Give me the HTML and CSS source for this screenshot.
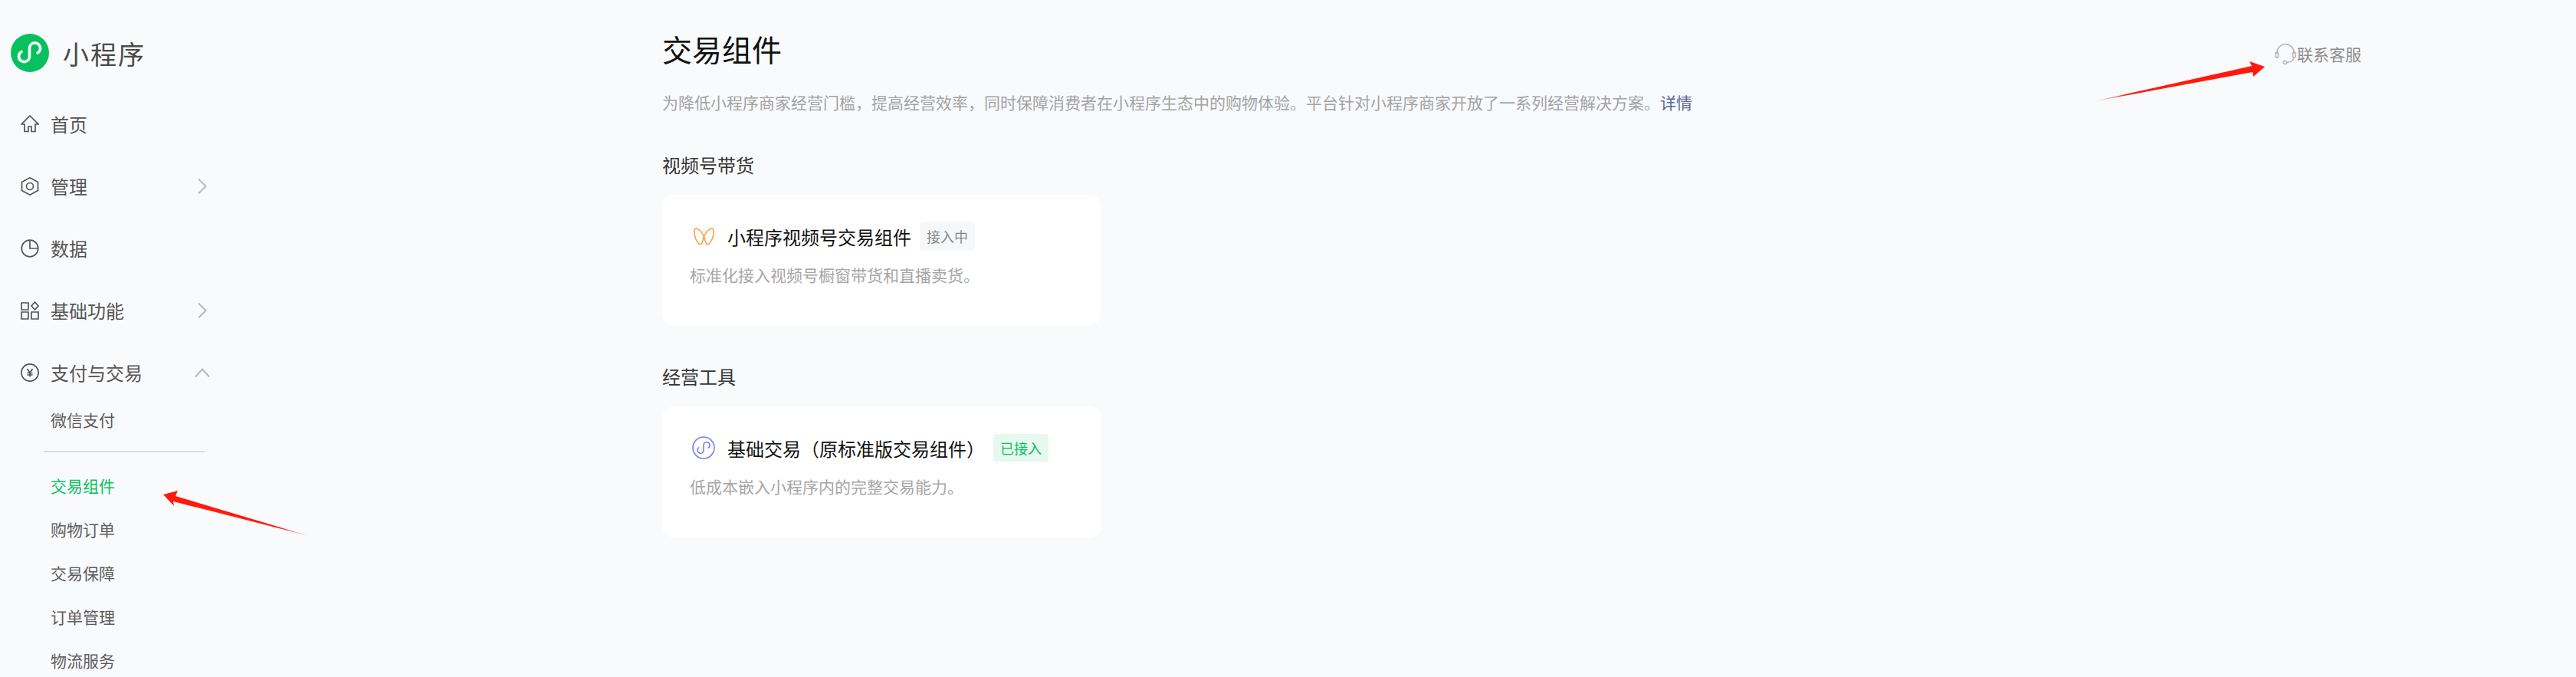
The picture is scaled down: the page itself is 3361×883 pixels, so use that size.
FILE: index.html

```html
<!DOCTYPE html>
<html lang="zh-CN">
<head>
    <meta charset="utf-8">
    <title>交易组件</title>
    <link rel="stylesheet" href="styles.css">
</head>
<body>
    <div class="page">
        <aside class="sidebar">
            <div class="brand">
                <svg class="brand-logo" viewBox="0 0 50 50">
                    <circle cx="25" cy="25" r="25" fill="#07c160"/>
                    <path d="M14 23.5A7 7 0 1 0 24.5 30V19A7 7 0 1 1 35 25" fill="none" stroke="#fff" stroke-width="3.6" stroke-linecap="round"/>
                </svg>
                <span class="brand-name">小程序</span>
            </div>

            <nav class="menu">
                <div class="menu-item">
                    <svg class="menu-icon" viewBox="0 0 24 24"><path d="M1 12 12 1l11 11h-4v9.500h-5V15h-4v6.500H5V12z"/></svg>
                    <span class="menu-label">首页</span>
                </div>
                <div class="menu-item">
                    <svg class="menu-icon" viewBox="0 0 24 24"><path d="M12 .8l10.500 5.700v11L12 23.200 1.500 17.500v-11z"/><circle cx="12" cy="12" r="4.500"/></svg>
                    <span class="menu-label">管理</span>
                    <svg class="menu-arrow" viewBox="0 0 20 20"><path d="M5 .5 14.500 10 5 19.500"/></svg>
                </div>
                <div class="menu-item">
                    <svg class="menu-icon" viewBox="0 0 24 24"><circle cx="12" cy="12" r="10.800"/><path d="M12 1.200V12h10.800"/></svg>
                    <span class="menu-label">数据</span>
                </div>
                <div class="menu-item">
                    <svg class="menu-icon" viewBox="0 0 24 24"><path d="M1 2h9v9H1zM1 14h9v9H1zM14 14h9v9h-9zM18.500 1l4.500 5-4.500 5-4.500-5z"/></svg>
                    <span class="menu-label">基础功能</span>
                    <svg class="menu-arrow" viewBox="0 0 20 20"><path d="M5 .5 14.500 10 5 19.500"/></svg>
                </div>
                <div class="menu-item">
                    <svg class="menu-icon" viewBox="0 0 24 24"><circle cx="12" cy="12" r="11.200"/><path d="M8.500 7l3.500 5 3.500-5M12 12v5.500M8.500 12.500h7M8.500 15h7"/></svg>
                    <span class="menu-label">支付与交易</span>
                    <svg class="menu-arrow" viewBox="0 0 20 20"><path d="M1 15.500 10 5.500l9 10"/></svg>
                </div>

                <div class="submenu">
                    <a class="sub-item">微信支付</a>
                    <div class="sub-line"></div>
                    <a class="sub-item active">交易组件</a>
                    <a class="sub-item">购物订单</a>
                    <a class="sub-item">交易保障</a>
                    <a class="sub-item">订单管理</a>
                    <a class="sub-item">物流服务</a>
                </div>
            </nav>
        </aside>

        <main class="content">
            <div class="content-top">
                <div>
                    <h1 class="title">交易组件</h1>
                    <p class="intro">为降低小程序商家经营门槛，提高经营效率，同时保障消费者在小程序生态中的购物体验。平台针对小程序商家开放了一系列经营解决方案。<a class="link">详情</a></p>
                </div>
                <div class="contact">
                    <svg class="contact-icon" viewBox="0 0 28 28">
                        <path d="M3 14V12.500a11 11 0 0 1 22 0V14"/>
                        <rect x="1" y="12" width="3.500" height="7" rx="1.750"/>
                        <rect x="23.500" y="12" width="3.500" height="7" rx="1.750"/>
                        <path d="M25 19c-.5 4-4 6-9.500 6.500"/>
                        <circle cx="13.500" cy="25.500" r="2.200"/>
                    </svg>
                    <span>联系客服</span>
                </div>
            </div>

            <h2 class="section-title first">视频号带货</h2>
            <div class="card">
                <div class="card-head">
                    <span class="card-icon">
                        <svg class="icon-wing" viewBox="0 0 27 23"><path d="M13.500 11.500C10.500 5 6 1 3 1 .5 1 .5 6 1.500 10.500 3 17 6.500 22 9 22c2.500 0 3-5.500 4.500-10.500C15 16.500 15.500 22 18 22c2.500 0 6-5 7.500-11.500C26.500 6 26.500 1 24 1c-3 0-7.500 4-10.500 10.500z"/></svg>
                    </span>
                    <span class="card-name">小程序视频号交易组件</span>
                    <span class="tag">接入中</span>
                </div>
                <p class="card-desc">标准化接入视频号橱窗带货和直播卖货。</p>
            </div>

            <h2 class="section-title">经营工具</h2>
            <div class="card">
                <div class="card-head">
                    <span class="card-icon">
                        <svg class="icon-ring" viewBox="0 0 30 30"><circle cx="15" cy="15" r="14"/><path d="M9.500 14.500a4 4 0 1 0 5.500 4v-7a4 4 0 1 1 5.500 4"/></svg>
                    </span>
                    <span class="card-name">基础交易（原标准版交易组件）</span>
                    <span class="tag tag-done">已接入</span>
                </div>
                <p class="card-desc">低成本嵌入小程序内的完整交易能力。</p>
            </div>
        </main>
    </div>

    <!-- красные стрелки поверх скриншота -->
    <svg class="marks" viewBox="0 0 3361 883">
        <defs>
            <linearGradient id="fadeLeft" gradientUnits="userSpaceOnUse" x1="213" y1="645" x2="403" y2="699">
                <stop offset="0.8" stop-color="#ff1a0d"/>
                <stop offset="1" stop-color="#ff1a0d" stop-opacity="0.2"/>
            </linearGradient>
            <linearGradient id="fadeRight" gradientUnits="userSpaceOnUse" x1="2955" y1="87" x2="2733" y2="132">
                <stop offset="0.8" stop-color="#ff1a0d"/>
                <stop offset="1" stop-color="#ff1a0d" stop-opacity="0.2"/>
            </linearGradient>
        </defs>
        <polygon fill="url(#fadeLeft)" points="213,645 232,640 229,647 403,699 226,654 227,660"/>
        <polygon fill="url(#fadeRight)" points="2955,87 2935,80 2938,86 2733,132 2939,94 2940,100"/>
    </svg>
</body>
</html>
```

FILE: styles.css

```css
* {
    box-sizing: border-box;
}

html, body {
    margin: 0;
    height: 100%;
}

body {
    position: relative;
    overflow: hidden;
    font-family: "Noto Sans CJK SC", "Liberation Sans", sans-serif;
    background-color: #f9fafc;
}

.page {
    display: flex;
    height: 883px;
    overflow: hidden;
}

.sidebar {
    flex: 0 0 274px;
    padding-top: 44px;
    color: #555;
}

.brand {
    display: flex;
    align-items: center;
    height: 50px;
    padding-left: 14px;
    margin-bottom: 27px;
}

.brand-logo {
    width: 50px;
    height: 50px;
    margin-right: 18px;
}

.brand-name {
    font-size: 34px;
    letter-spacing: 2px;
    color: #4a4a4a;
}

.menu-item {
    display: flex;
    align-items: center;
    height: 81px;
    padding-left: 27px;
    font-size: 24px;
    line-height: 34px;
}

.menu-icon {
    flex: none;
    width: 24px;
    height: 24px;
    margin-right: 15px;
    fill: none;
    stroke: #555;
    stroke-width: 1.700;
}

.menu-label {
    flex: 1;
}

.menu-arrow {
    flex: none;
    width: 20px;
    height: 20px;
    fill: none;
    stroke: #b8b8b8;
    stroke-width: 2;
}

.submenu {
    margin-top: -8px;
}

.sub-item {
    display: flex;
    align-items: center;
    height: 57px;
    padding-left: 66px;
    font-size: 21px;
    color: #5c5c5c;
}

.sub-item.active {
    color: #07c160;
}

.sub-line {
    width: 210px;
    height: 2px;
    margin: 13px 0 14px 57px;
    background-color: #dcdde0;
}

.content {
    flex: 1;
    padding: 35px 280px 0 590px;
}

.content-top {
    display: flex;
    justify-content: space-between;
    align-items: flex-start;
}

.title {
    margin: 0;
    font-size: 39px;
    font-weight: 400;
    line-height: 56px;
    color: #111;
}

.intro {
    margin: 27px 0 0;
    font-size: 21px;
    line-height: 30px;
    color: #a3a3a3;
}

.link {
    color: #576b95;
}

.contact {
    display: flex;
    align-items: center;
    margin-top: 21px;
    font-size: 21px;
    line-height: 28px;
    color: #8c8c8c;
}

.contact-icon {
    width: 28px;
    height: 28px;
    margin-right: 1px;
    fill: none;
    stroke: #b5b5b5;
    stroke-width: 1.600;
}

.section-title {
    margin: 49px 0 22px;
    font-size: 24px;
    font-weight: 400;
    line-height: 34px;
    color: #353535;
}

.section-title.first {
    margin-top: 50px;
}

.card {
    width: 573px;
    height: 171px;
    padding: 36px 36px 0;
    background-color: #fff;
    border-radius: 16px;
}

.card-head {
    display: flex;
    align-items: center;
    height: 36px;
}

.card-icon {
    display: flex;
    justify-content: center;
    align-items: center;
    flex: none;
    width: 36px;
    margin-right: 13px;
}

.icon-wing {
    width: 27px;
    height: 23px;
    fill: none;
    stroke: #fa9d3b;
    stroke-width: 1.500;
}

.icon-ring {
    width: 30px;
    height: 30px;
    fill: none;
    stroke: #7b7ff0;
    stroke-width: 1.600;
}

.card-name {
    font-size: 24px;
    color: #111;
}

.tag {
    height: 36px;
    margin-left: 11px;
    padding: 0 9px;
    font-size: 18px;
    line-height: 36px;
    color: #888;
    background-color: #f6f7f9;
    border-radius: 4px;
}

.tag-done {
    color: #07c160;
    background-color: #e6f8ef;
}

.card-desc {
    margin: 17px 0 0;
    font-size: 21px;
    line-height: 30px;
    color: #a6a6a6;
}

.marks {
    position: absolute;
    top: 0;
    left: 0;
    width: 3361px;
    height: 883px;
    pointer-events: none;
}
```
